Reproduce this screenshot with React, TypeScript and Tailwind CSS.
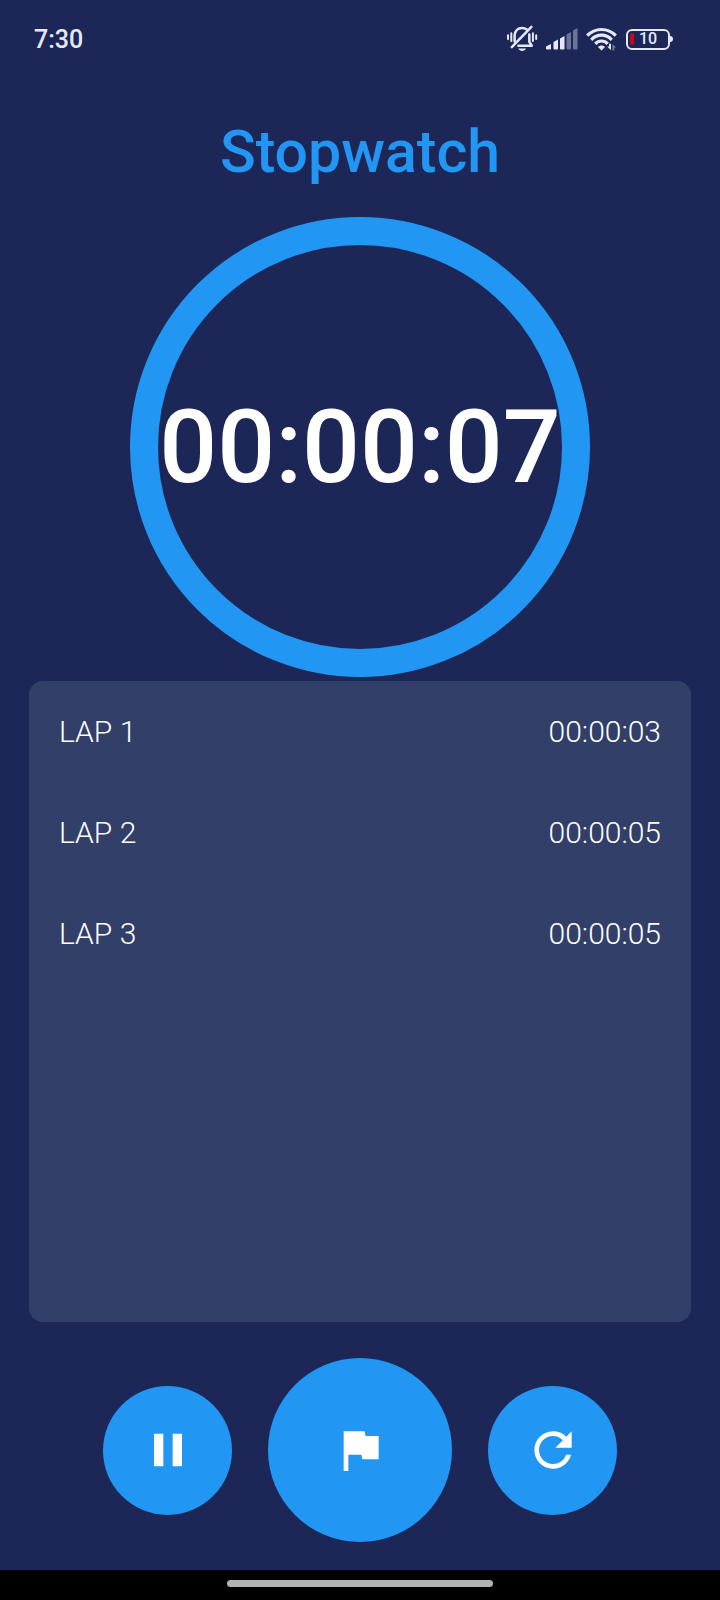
import { useState } from "react";
import { MdFlag, MdPause, MdRefresh } from "react-icons/md";

const initialLaps = ["00:00:03", "00:00:05", "00:00:05"];

function MutedBellIcon() {
  return (
    <svg width="32" height="28" viewBox="0 0 32 28" fill="none" stroke="#e4e9fb" strokeWidth="2.5" strokeLinecap="round" aria-hidden="true">
      <path d="M8.6 16.6V10.4C9 5.8 12 2.900 16 2.900c2 0 3.600.6 4.800 1.600" />
      <path d="M23.300 9.600v7.200l2.500 3.900H12.400" strokeLinejoin="round" />
      <path d="M25.400 1.900 5.800 22.200" />
      <path d="M12.300 23.500h7.800c-.8 1.600-2.100 2.400-3.900 2.400s-3.100-.8-3.900-2.400z" fill="#e4e9fb" stroke="none" />
      <path d="M5.300 8.200v7.800M26.900 8.200v7.800" strokeWidth="2" />
      <path d="M2 10.300v3.600M30.200 10.300v3.600" strokeWidth="2" />
    </svg>
  );
}

function SignalIcon() {
  return (
    <svg width="32" height="22" viewBox="0 0 32 22" fill="#e4e9fb" aria-hidden="true">
      <path d="M0 18.500 5 16v4.500a1 1 0 0 1-1 1H1a1 1 0 0 1-1-1z" />
      <path d="M7.500 14 12 11.500v9a1 1 0 0 1-1 1H8.500a1 1 0 0 1-1-1z" />
      <path d="M14 10.500 18.500 8v12.500a1 1 0 0 1-1 1H15a1 1 0 0 1-1-1z" />
      <path d="M20.500 6.500 25 4v16.500a1 1 0 0 1-1 1h-2.500a1 1 0 0 1-1-1z" opacity="0.4" />
      <path d="M27 2.500 31.500 0v20.500a1 1 0 0 1-1 1H28a1 1 0 0 1-1-1z" opacity="0.4" />
    </svg>
  );
}

function WifiIcon() {
  return (
    <svg width="32" height="24" viewBox="0 0 32 24" fill="none" stroke="#e4e9fb" strokeWidth="3.200" aria-hidden="true">
      <path d="M1.200 8.700C5.200 4.500 10 2.500 15.500 2.500s10.300 2 14.300 6.200" />
      <path d="M5.200 12.800c3-3 6.300-4.600 10.300-4.600s7.300 1.600 10.300 4.600" />
      <path d="M9.300 16.800c1.800-1.900 3.800-2.800 6.200-2.800s4.400.9 6.200 2.800" />
      <path d="M15.500 23.400 12 20c.9-1 2.100-1.500 3.500-1.500s2.600.5 3.500 1.500z" fill="#e4e9fb" stroke="none" />
      <path d="M25 16.800v6.400l-3.800-3.800h1.800v-2.600z" fill="#e4e9fb" stroke="none" />
      <path d="M26.500 23.400V17l3.500 3.600h-1.700v2.800z" fill="#e4e9fb" stroke="none" opacity="0.45" />
    </svg>
  );
}

function Battery({ level }: { level: number }) {
  return (
    <div className="flex items-center" role="img" aria-label={`Battery ${level}%`}>
      <div className="flex h-[21px] w-11 items-center rounded-md border-2 border-[#e4e9fb] pl-0.5">
        <span className="h-3 w-1 rounded-full bg-[#c40a20]" />
        <span className="flex-1 pr-1.5 text-center text-base leading-4 font-medium">{level}</span>
      </div>
      <span className="h-1.5 w-[3px] rounded-r-sm bg-[#e4e9fb]" />
    </div>
  );
}

function StatusBar() {
  return (
    <header className="flex h-[78px] items-center justify-between pr-[47px] pl-[34px] text-[#e4e9fb]">
      <span className="pt-0.5 text-[25px] leading-8 font-medium">7:30</span>
      <div className="flex items-center gap-2">
        <MutedBellIcon />
        <SignalIcon />
        <WifiIcon />
        <Battery level={10} />
      </div>
    </header>
  );
}

export default function App() {
  const [laps, setLaps] = useState(initialLaps);
  const time = "00:00:07";

  return (
    <div className="flex min-h-screen flex-col bg-[#1c2757] font-['Roboto',sans-serif]">
      <StatusBar />

      <main className="flex flex-1 flex-col px-[29px] pb-7">
        <h1 className="pt-9 text-center text-[59px] leading-[76px] font-medium text-[#2196f3]">Stopwatch</h1>

        <div
          role="timer"
          className="mx-auto mt-[27px] flex size-[460px] items-center justify-center rounded-full border-[28px] border-[#2196f3]"
        >
          <span className="text-[102px] leading-[120px] font-medium whitespace-nowrap text-white">{time}</span>
        </div>

        <ol className="mt-1 flex-1 rounded-[14px] bg-[#323f68] px-[30px] text-[30px] leading-[101px] font-light text-white">
          {laps.map((lap, index) => (
            <li key={index} className="flex justify-between">
              <span>LAP {index + 1}</span>
              <span>{lap}</span>
            </li>
          ))}
        </ol>

        <div className="mt-9 flex items-center justify-center gap-9 text-white">
          <button type="button" aria-label="Pause" className="flex size-[129px] items-center justify-center rounded-full bg-[#2196f3]">
            <MdPause className="size-14" />
          </button>
          <button
            type="button"
            aria-label="Record lap"
            onClick={() => setLaps([...laps, time])}
            className="flex size-[184px] items-center justify-center rounded-full bg-[#2196f3]"
          >
            <MdFlag className="size-14" />
          </button>
          <button
            type="button"
            aria-label="Reset"
            onClick={() => setLaps([])}
            className="flex size-[129px] items-center justify-center rounded-full bg-[#2196f3]"
          >
            <MdRefresh className="size-14" />
          </button>
        </div>
      </main>

      <footer className="flex h-[30px] items-center justify-center bg-black pb-1">
        <div className="h-[7px] w-[37%] rounded-full bg-[#b3b3b3]" />
      </footer>
    </div>
  );
}
